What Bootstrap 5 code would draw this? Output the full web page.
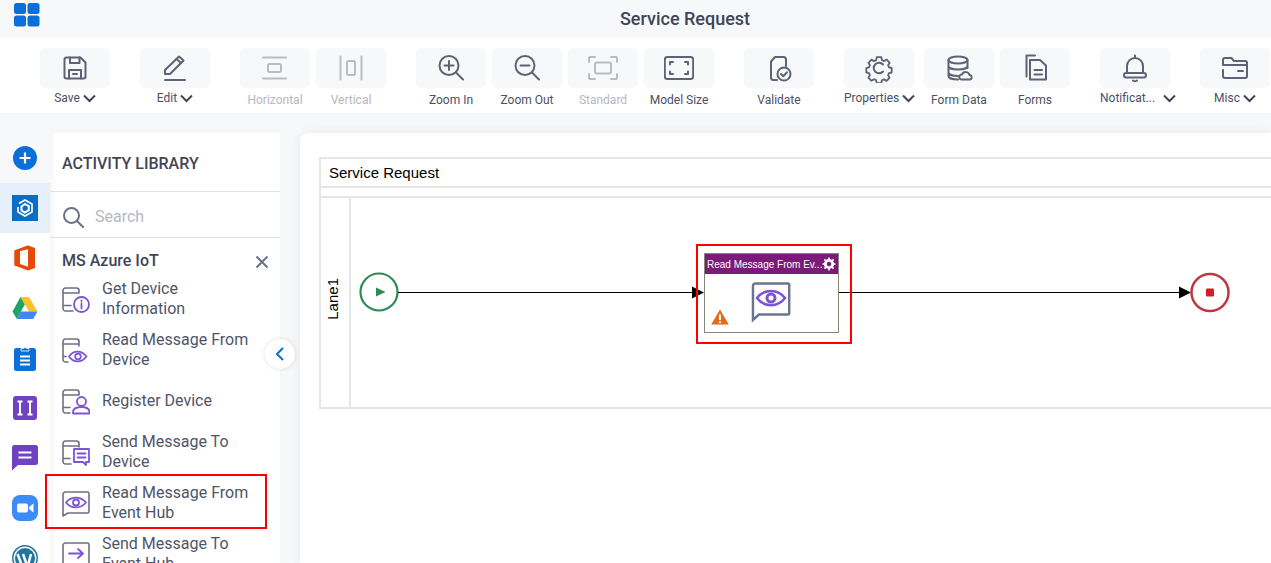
<!DOCTYPE html>
<html lang="en">
<head>
    <meta charset="UTF-8" />
    <meta name="viewport" content="width=device-width, initial-scale=1" />
    <title>Service Request</title>
    <link href="https://cdn.jsdelivr.net/npm/bootstrap@5.3.2/dist/css/bootstrap.min.css" rel="stylesheet" />
    <style>
        html, body { height: 100%; }
        body {
            background: #f7f8fa;
            font-family: Roboto, "Liberation Sans", sans-serif;
            color: #4a5065;
            overflow: hidden;
        }
        .top-bar { height: 38px; }
        .app-grid { left: 14px; top: 3px; }
        .page-title { font-size: 18px; font-weight: 500; color: #3f4557; padding-left: 99px; line-height: 36px; }
        .tool-bar { height: 75px; background: #fff; padding: 10px 0 0 40px; gap: 30px; }
        .tool-group { gap: 6px; }
        .tool-item { width: 70px; }
        .tool-item.wide-left { margin-right: 4px; }
        .tool-tile { height: 40px; background: #f7f8fa; border-radius: 5px; }
        .tool-tile svg { width: 30px; height: 30px; fill: none; stroke: #5d6374; stroke-width: 2; stroke-linecap: round; stroke-linejoin: round; }
        .tool-label { font-size: 12px; line-height: 14px; margin-top: 5px; white-space: nowrap; color: #4a5065; }
        .tool-label.has-menu { margin-top: 3px; }
        .tool-label svg { width: 13px; height: 9px; fill: none; stroke: #3f4557; stroke-width: 2; margin-left: 3px; }
        .tool-off .tool-tile svg { stroke: #b9bcc5; }
        .tool-off .tool-label { color: #b5b8c0; }
        .work-area { height: 450px; padding-top: 20px; }
        .side-rail { width: 50px; flex: none; background: #fff; }
        .rail-item { height: 50px; }
        .rail-item.rail-top { background: #f7f8fa; }
        .rail-item.current { background: #e6f0fa; }
        .lib-panel { width: 230px; flex: none; background: #fff; box-shadow: inset 7px 0 6px -5px rgba(0, 0, 0, .05); }
        .lib-title { height: 59px; padding-left: 12px; font-size: 16px; font-weight: 500; color: #3f4557; border-bottom: 1px solid #dfe1e5; line-height: 61px; }
        .lib-search { height: 46px; padding: 4px 0 0 12px; border-bottom: 1px solid #dfe1e5; font-size: 16px; color: #b5b8c0; gap: 11px; }
        .lib-group { height: 41px; padding: 11px 11px 0 12px; font-size: 16px; font-weight: 500; color: #3f4557; }
        .lib-close { margin-top: 6px; }
        .lib-item { height: 40px; margin: 0 0 11px 12px; gap: 12px; font-size: 16px; line-height: 20px; color: #4f5568; }
        .lib-item span { width: 150px; }
        .lib-item svg { width: 28px; height: 28px; flex: none; fill: none; stroke: #6b7184; stroke-width: 1.6; stroke-linecap: round; stroke-linejoin: round; }
        .lib-item svg .accent { stroke: #7b55d3; stroke-width: 1.8; }
        .item-mark { left: -17px; top: -9px; width: 222px; height: 55px; border: 2px solid #f00; }
        .fold-btn { left: 265px; top: 226px; width: 30px; height: 30px; background: #fff; border-radius: 50%; box-shadow: 0 0 5px rgba(0, 0, 0, .12); }
        .canvas-box { margin-left: 20px; background: #fff; border-radius: 8px 0 0 0; padding: 24px 0 0 19px; box-shadow: 0 0 12px rgba(0, 0, 0, .07); }
        .pool-box { height: 252px; border: 2px solid #e6e6e6; border-right: 0; font-family: "Liberation Sans", sans-serif; color: #000; font-size: 15px; }
        .pool-head { height: 29px; line-height: 27px; padding-left: 8px; border-bottom: 2px solid #e6e6e6; }
        .pool-strip { height: 10px; border-bottom: 2px solid #e6e6e6; }
        .lane-row { height: 209px; }
        .lane-name { width: 30px; border-right: 2px solid #e6e6e6; }
        .lane-name span { writing-mode: vertical-rl; transform: rotate(180deg); margin: 0 3px 8px 0; }
        .flow-lines { left: 0; top: 0; }
        .flow-node { left: 353px; top: 55px; width: 135px; height: 80px; border: 1px solid #86867a; background: #fff; }
        .node-head { height: 20px; background: #7b1a78; color: #fff; font-size: 10px; line-height: 21px; padding-left: 2px; white-space: nowrap; }
        .node-gear { right: 2px; top: 3px; }
        .node-eye { left: 46px; top: 28px; }
        .node-warn { left: 6px; top: 55px; }
        .node-mark { left: -9px; top: -10px; width: 156px; height: 100px; border: 2px solid #f00; }
    </style>
</head>
<body>
<div class="top-bar d-flex align-items-center justify-content-center position-relative">
    <svg class="app-grid position-absolute" width="26" height="24" viewBox="0 0 26 24" fill="#0a6fd8">
        <rect x="0" y="0" width="12" height="11" rx="2.5"/><rect x="13.5" y="0" width="12" height="11" rx="2.5"/>
        <rect x="0" y="12.5" width="12" height="11" rx="2.5"/><rect x="13.5" y="12.5" width="12" height="11" rx="2.5"/>
    </svg>
    <div class="page-title">Service Request</div>
</div>

<div class="tool-bar d-flex">
    <div class="tool-item text-center">
        <div class="tool-tile d-flex align-items-center justify-content-center">
            <svg viewBox="0 0 30 30"><path d="M4.500 6.500a2 2 0 0 1 2-2h14l5 5v14a2 2 0 0 1-2 2h-17a2 2 0 0 1-2-2z"/><path d="M10 4.500v5.500h9.500V4.500M9 25.500v-8.500h12v8.500M13 21h4"/></svg>
        </div>
        <div class="tool-label has-menu">Save<svg viewBox="0 0 13 9"><path d="M1 1.500l5.500 5.500L12 1.500"/></svg></div>
    </div>
    <div class="tool-item text-center">
        <div class="tool-tile d-flex align-items-center justify-content-center">
            <svg viewBox="0 0 30 30"><path d="M5 21v-4L19 3.500l4.500 4L10 21z"/><path d="M16.500 6l4.500 4M5 27h20"/></svg>
        </div>
        <div class="tool-label has-menu">Edit<svg viewBox="0 0 13 9"><path d="M1 1.500l5.500 5.500L12 1.500"/></svg></div>
    </div>
    <div class="tool-group d-flex">
        <div class="tool-item tool-off text-center">
            <div class="tool-tile d-flex align-items-center justify-content-center">
                <svg viewBox="0 0 30 30"><path d="M3 4.500h23M3 25.500h23"/><rect x="8" y="11" width="13" height="8" rx="1.500"/></svg>
            </div>
            <div class="tool-label">Horizontal</div>
        </div>
        <div class="tool-item tool-off text-center">
            <div class="tool-tile d-flex align-items-center justify-content-center">
                <svg viewBox="0 0 30 30"><path d="M4.500 3.500v23M25.500 3.500v23"/><rect x="11" y="8" width="8" height="14" rx="1.500"/></svg>
            </div>
            <div class="tool-label">Vertical</div>
        </div>
    </div>
    <div class="tool-group d-flex">
        <div class="tool-item text-center">
            <div class="tool-tile d-flex align-items-center justify-content-center">
                <svg viewBox="0 0 30 30"><circle cx="13" cy="12.500" r="9.500"/><path d="M20 19.500l7 7M13 8v9M8.500 12.500h9"/></svg>
            </div>
            <div class="tool-label">Zoom In</div>
        </div>
        <div class="tool-item text-center">
            <div class="tool-tile d-flex align-items-center justify-content-center">
                <svg viewBox="0 0 30 30"><circle cx="13" cy="12.500" r="9.500"/><path d="M20 19.500l7 7M8.500 12.500h9"/></svg>
            </div>
            <div class="tool-label">Zoom Out</div>
        </div>
        <div class="tool-item tool-off text-center">
            <div class="tool-tile d-flex align-items-center justify-content-center">
                <svg viewBox="0 0 30 30"><path d="M1 9V5a1 1 0 0 1 1-1h5M23 4h5a1 1 0 0 1 1 1v4M29 21v4a1 1 0 0 1-1 1h-5M7 26H2a1 1 0 0 1-1-1v-4"/><rect x="7" y="9.500" width="16" height="11" rx="2"/></svg>
            </div>
            <div class="tool-label">Standard</div>
        </div>
        <div class="tool-item text-center">
            <div class="tool-tile d-flex align-items-center justify-content-center">
                <svg viewBox="0 0 30 30"><rect x="0.800" y="4" width="28.400" height="22" rx="2.500"/><path d="M6 11.500V9h3M21 9h3v2.500M24 18.500V21h-3M9 21H6v-2.500"/></svg>
            </div>
            <div class="tool-label">Model Size</div>
        </div>
    </div>
    <div class="tool-item text-center">
        <div class="tool-tile d-flex align-items-center justify-content-center">
            <svg viewBox="0 0 30 30"><path d="M13 27H9.500a2.500 2.500 0 0 1-2.500-2.500V8.500L11 4h8.500A2.500 2.500 0 0 1 22 6.500V13"/><circle cx="20" cy="21" r="6.500"/><path d="M17 21l2.200 2.300 3.800-4"/></svg>
        </div>
        <div class="tool-label">Validate</div>
    </div>
    <div class="tool-group d-flex">
        <div class="tool-item wide-left text-center">
            <div class="tool-tile d-flex align-items-center justify-content-center">
                <svg viewBox="0 0 30 30"><path d="M12.500 3h5l.8 3.300 2.400 1 2.900-1.700 3.300 3.600-1.800 2.700 1 2.400 3 .7v5l-3 .7-1 2.400 1.600 2.800-3.400 3.400-2.700-1.700-2.400 1-.7 3.100h-5l-.8-3.200-2.300-1-2.800 1.700-3.400-3.500 1.700-2.700-1-2.300-3-.8v-4.800l3-.8 1-2.400-1.600-2.700 3.400-3.500 2.700 1.700 2.400-1z" transform="translate(1.500 1.500) scale(.9)"/><path d="M19 11.500a5.300 5.300 0 1 0 0 7"/></svg>
            </div>
            <div class="tool-label has-menu">Properties<svg viewBox="0 0 13 9"><path d="M1 1.500l5.500 5.500L12 1.500"/></svg></div>
        </div>
        <div class="tool-item text-center">
            <div class="tool-tile d-flex align-items-center justify-content-center">
                <svg viewBox="0 0 30 30"><ellipse cx="14" cy="7" rx="9.500" ry="3.500"/><path d="M4.500 7v16c0 2 4 3.500 9.500 3.500M4.500 13c0 2 4 3.500 9.500 3.500s9.500-1.500 9.500-3.500M4.500 19.500c0 2 4 3.500 9.500 3.500M23.500 7v8"/><path d="M17.500 26.500a2.500 2.500 0 0 1 .5-5 4 4 0 0 1 7.500.5 2.300 2.300 0 0 1 .5 4.500z"/></svg>
            </div>
            <div class="tool-label">Form Data</div>
        </div>
        <div class="tool-item text-center">
            <div class="tool-tile d-flex align-items-center justify-content-center">
                <svg viewBox="0 0 30 30"><path d="M15 2.500H6.500v21"/><path d="M10 7h10l6 5.500v14H10zM14.500 17h7.500M14.500 21.500h7.500"/></svg>
            </div>
            <div class="tool-label">Forms</div>
        </div>
    </div>
    <div class="tool-item text-center">
        <div class="tool-tile d-flex align-items-center justify-content-center">
            <svg viewBox="0 0 30 30"><path d="M15 2.500v2.500M7 20V13a8 8 0 0 1 16 0v7"/><rect x="4" y="20" width="22" height="4.500" rx="2.200"/><path d="M13 27.500c1 .8 3 .8 4 0"/></svg>
        </div>
        <div class="tool-label has-menu">Notificat...<svg class="ms-2" viewBox="0 0 13 9"><path d="M1 1.500l5.500 5.500L12 1.500"/></svg></div>
    </div>
    <div class="tool-item text-center">
        <div class="tool-tile d-flex align-items-center justify-content-center">
            <svg viewBox="0 0 30 30"><path d="M3 12V7a2 2 0 0 1 2-2h6.500l2.500 3h11a2 2 0 0 1 2 2v2zM3 17v6a2 2 0 0 0 2 2h20a2 2 0 0 0 2-2V12M18 18h5"/></svg>
        </div>
        <div class="tool-label has-menu">Misc<svg viewBox="0 0 13 9"><path d="M1 1.500l5.500 5.500L12 1.500"/></svg></div>
    </div>
</div>

<div class="work-area d-flex position-relative">
    <div class="side-rail">
        <div class="rail-item rail-top d-flex align-items-center justify-content-center">
            <svg width="24" height="24" viewBox="0 0 24 24"><circle cx="12" cy="12" r="12" fill="#0a6fd8"/><path d="M12 6.500v11M6.500 12h11" stroke="#fff" stroke-width="2.200"/></svg>
        </div>
        <div class="rail-item current d-flex align-items-center justify-content-center">
            <svg width="26" height="26" viewBox="0 0 26 26"><rect width="26" height="26" fill="#0a6fc4"/><path d="M7 8.500l6-3.500 7 4v8l-7 4-7-4v-5" fill="none" stroke="#fff" stroke-width="1.600"/><path d="M13 9l3.800 2.200v4L13 17.500l-3.500-2v-4z" fill="none" stroke="#fff" stroke-width="2"/></svg>
        </div>
        <div class="rail-item d-flex align-items-center justify-content-center">
            <svg width="22" height="26" viewBox="0 0 22 26"><path d="M0.500 5.500L14 .5l7 2.500v20l-7 2.500-13.500-5z" fill="#e64a0b"/><path d="M14 4L6 6v13l8 2.800z" fill="#fff"/><path d="M.5 20.500L6 19V6l8-2v-3.500L.5 5.500z" fill="#e64a0b"/></svg>
        </div>
        <div class="rail-item d-flex align-items-center justify-content-center">
            <svg width="26" height="24" viewBox="0 0 26 24"><path d="M8.500 1h8.500l8.500 14.500h-8.500z" fill="#fbc02d"/><path d="M8.500 1L.5 15.500l4.300 7.500 8-14.500z" fill="#1fa463"/><path d="M4.800 23h16.400l4.300-7.500H8.700z" fill="#4285f4"/></svg>
        </div>
        <div class="rail-item d-flex align-items-center justify-content-center">
            <svg width="24" height="26" viewBox="0 0 24 26"><rect x="1" y="3" width="22" height="23" rx="2.500" fill="#0a6fd8"/><path d="M8 3.500h2.500a1.700 1.700 0 0 1 3 0H16V6H8z" fill="#0a6fd8" stroke="#fff" stroke-width=".8"/><path d="M7 11.500h10M7 15.500h10M7 19.500h10" stroke="#fff" stroke-width="1.800"/></svg>
        </div>
        <div class="rail-item d-flex align-items-center justify-content-center">
            <svg width="24" height="24" viewBox="0 0 24 24"><rect width="24" height="24" rx="3" fill="#6f42c1"/><path d="M4.500 5.500h5M4.500 18.500h5M7 5.500v13M14.500 5.500h5M14.500 18.500h5M17 5.500v13" stroke="#fff" stroke-width="2"/></svg>
        </div>
        <div class="rail-item d-flex align-items-center justify-content-center">
            <svg width="26" height="26" viewBox="0 0 26 26"><path d="M2.500 0h21A2.500 2.500 0 0 1 26 2.500v15a2.500 2.500 0 0 1-2.500 2.500H6l-6 5.500v-23A2.500 2.500 0 0 1 2.500 0z" fill="#6f42c1"/><path d="M6.500 7.500h13M6.500 12.500h13" stroke="#fff" stroke-width="2"/></svg>
        </div>
        <div class="rail-item d-flex align-items-center justify-content-center">
            <svg width="26" height="26" viewBox="0 0 26 26"><rect width="26" height="26" rx="8" fill="#3b8df5"/><rect x="5" y="8.500" width="11" height="9" rx="2" fill="#fff"/><path d="M17 12l4.500-3.500v9L17 14z" fill="#fff"/></svg>
        </div>
        <div class="rail-item d-flex align-items-center justify-content-center">
            <svg width="26" height="26" viewBox="0 0 26 26"><circle cx="13" cy="13" r="12.200" fill="#fff" stroke="#21759b" stroke-width="1.500"/><circle cx="13" cy="13" r="10" fill="#21759b"/><path d="M5.500 9l5 13M11 9l4.500 13 3.500-13" fill="none" stroke="#fff" stroke-width="2.500"/></svg>
        </div>
    </div>

    <div class="lib-panel">
        <div class="lib-title">ACTIVITY LIBRARY</div>
        <div class="lib-search d-flex align-items-center">
            <svg width="22" height="22" viewBox="0 0 22 22" fill="none" stroke="#6b7184" stroke-width="2"><circle cx="9.500" cy="9.500" r="7.500"/><path d="M15 15l6 6" stroke-linecap="round"/></svg>
            <span>Search</span>
        </div>
        <div class="lib-group d-flex justify-content-between align-items-start">
            <span>MS Azure IoT</span>
            <svg class="lib-close" width="14" height="14" viewBox="0 0 14 14" stroke="#6b7184" stroke-width="2"><path d="M1.500 1.500l11 11M12.500 1.500l-11 11"/></svg>
        </div>
        <div class="lib-item d-flex align-items-center">
            <svg viewBox="0 0 28 28"><path d="M1 14V5.500A2.500 2.500 0 0 1 3.500 3h11A2.500 2.500 0 0 1 17 5.500V8M1 8h16M1 14v9.500A2.500 2.500 0 0 0 3.500 26H11M1 20.500h8"/><circle class="accent" cx="19.500" cy="19.500" r="7.500"/><path class="accent" d="M19.500 18.500v5M19.500 15.500v.8"/></svg>
            <span>Get Device Information</span>
        </div>
        <div class="lib-item d-flex align-items-center">
            <svg viewBox="0 0 28 28"><path d="M1 14V5.500A2.500 2.500 0 0 1 3.500 3h11A2.500 2.500 0 0 1 17 5.500V10M1 8h16M1 14v9.500A2.500 2.500 0 0 0 3.500 26H6M1 20.500h3"/><path class="accent" d="M7 20.500c4.500-6.500 12.500-6.500 17.500 0-5 6.500-13 6.500-17.500 0z"/><circle class="accent" cx="16" cy="20.500" r="2.800"/></svg>
            <span>Read Message From Device</span>
        </div>
        <div class="lib-item d-flex align-items-center">
            <svg viewBox="0 0 28 28"><path d="M1 14V5.500A2.500 2.500 0 0 1 3.500 3h11A2.500 2.500 0 0 1 17 5.500V8M1 8h16M1 14v9.500A2.500 2.500 0 0 0 3.500 26H8M1 20.500h7"/><circle class="accent" cx="19.500" cy="14.500" r="4.500"/><path class="accent" d="M11 26.500v-1c0-3.500 3-5.500 8.500-5.500s8 2 8 5.500v1z"/></svg>
            <span>Register Device</span>
        </div>
        <div class="lib-item d-flex align-items-center">
            <svg viewBox="0 0 28 28"><path d="M1 14V5.500A2.500 2.500 0 0 1 3.500 3h11A2.500 2.500 0 0 1 17 5.500V9M1 8h16M1 14v9.500A2.500 2.500 0 0 0 3.500 26H9M1 20.500h7"/><path class="accent" d="M12 11h15v13h-3v3l-3-3h-9zM15.500 15.500h8M15.500 19.500h8"/></svg>
            <span>Send Message To Device</span>
        </div>
        <div class="lib-item d-flex align-items-center position-relative">
            <svg viewBox="0 0 28 28"><path d="M1 27V5.500A2.500 2.500 0 0 1 3.500 3h22A1.500 1.500 0 0 1 27 4.500v18a1.500 1.500 0 0 1-1.500 1.500H6z"/><path class="accent" d="M4 13.500c5-6.500 14.500-6.500 20 0-5.500 6.500-15 6.500-20 0z"/><circle class="accent" cx="14" cy="13.500" r="3"/></svg>
            <span>Read Message From Event Hub</span>
            <div class="item-mark position-absolute"></div>
        </div>
        <div class="lib-item d-flex align-items-center">
            <svg viewBox="0 0 28 28"><path d="M1 27V5.500A2.500 2.500 0 0 1 3.500 3h22A1.500 1.500 0 0 1 27 4.500v18a1.500 1.500 0 0 1-1.500 1.500H6z"/><path class="accent" d="M7 13.500h14M16 9l5 4.500-5 4.500"/></svg>
            <span>Send Message To Event Hub</span>
        </div>
    </div>

    <div class="fold-btn position-absolute d-flex align-items-center justify-content-center">
        <svg width="10" height="16" viewBox="0 0 10 16" fill="none" stroke="#0a6fd8" stroke-width="2"><path d="M8 2L2 8l6 6"/></svg>
    </div>

    <div class="canvas-box flex-grow-1">
        <div class="pool-box">
            <div class="pool-head">Service Request</div>
            <div class="pool-strip"></div>
            <div class="d-flex lane-row">
                <div class="lane-name d-flex align-items-center justify-content-center"><span>Lane1</span></div>
                <div class="flex-grow-1 position-relative">
                    <svg class="flow-lines position-absolute" width="921" height="209" viewBox="0 0 921 209">
                        <circle cx="28" cy="94" r="18.500" fill="#fff" stroke="#2e8b57" stroke-width="2.200"/>
                        <path d="M25 89.500l9.500 4.500-9.500 4.500z" fill="#2e8b57"/>
                        <path d="M47 94.500h295M488 94.500h341" stroke="#000" stroke-width="1"/>
                        <path d="M341 88.500l12 6-12 6zM828 88.500l12 6-12 6z" fill="#000"/>
                        <circle cx="859" cy="94.500" r="18.500" fill="#fff" stroke="#c0363c" stroke-width="2.500"/>
                        <rect x="855" y="90.500" width="8" height="8" rx="1" fill="#cf1f25"/>
                    </svg>
                    <div class="flow-node position-absolute">
                        <div class="node-head position-relative">Read Message From Ev...
                            <svg class="node-gear position-absolute" width="14" height="14" viewBox="0 0 14 14"><circle cx="7" cy="7" r="3.800" fill="none" stroke="#fff" stroke-width="2.600"/><path d="M7 .5v13M.5 7h13M2.400 2.400l9.200 9.200M11.600 2.400l-9.200 9.200" stroke="#fff" stroke-width="1.600"/><circle cx="7" cy="7" r="2.200" fill="#7b1a78"/></svg>
                        </div>
                        <svg class="node-eye position-absolute" width="40" height="42" viewBox="0 0 40 42" fill="none"><path d="M2 38V4a2.500 2.500 0 0 1 2.500-2.500h33A1.500 1.500 0 0 1 39 3v28a1.500 1.500 0 0 1-1.500 1.500H8z" transform="scale(.98 1)" stroke="#6b7590" stroke-width="2.500"/><path d="M6 16c7-9.500 21-9.500 28 0-7 9.500-21 9.500-28 0z" stroke="#7b55d3" stroke-width="2.500"/><circle cx="20" cy="16" r="4" stroke="#7b55d3" stroke-width="3"/></svg>
                        <svg class="node-warn position-absolute" width="18" height="16" viewBox="0 0 18 16"><path d="M9 .5L17.800 15.500H.2z" fill="#e06c1f"/><path d="M9 5.500v5.500M9 12.300v1.700" stroke="#fff" stroke-width="2"/></svg>
                        <div class="node-mark position-absolute"></div>
                    </div>
                </div>
            </div>
        </div>
    </div>
</div>
<script src="https://cdn.jsdelivr.net/npm/bootstrap@5.3.2/dist/js/bootstrap.bundle.min.js"></script>
</body>
</html>
